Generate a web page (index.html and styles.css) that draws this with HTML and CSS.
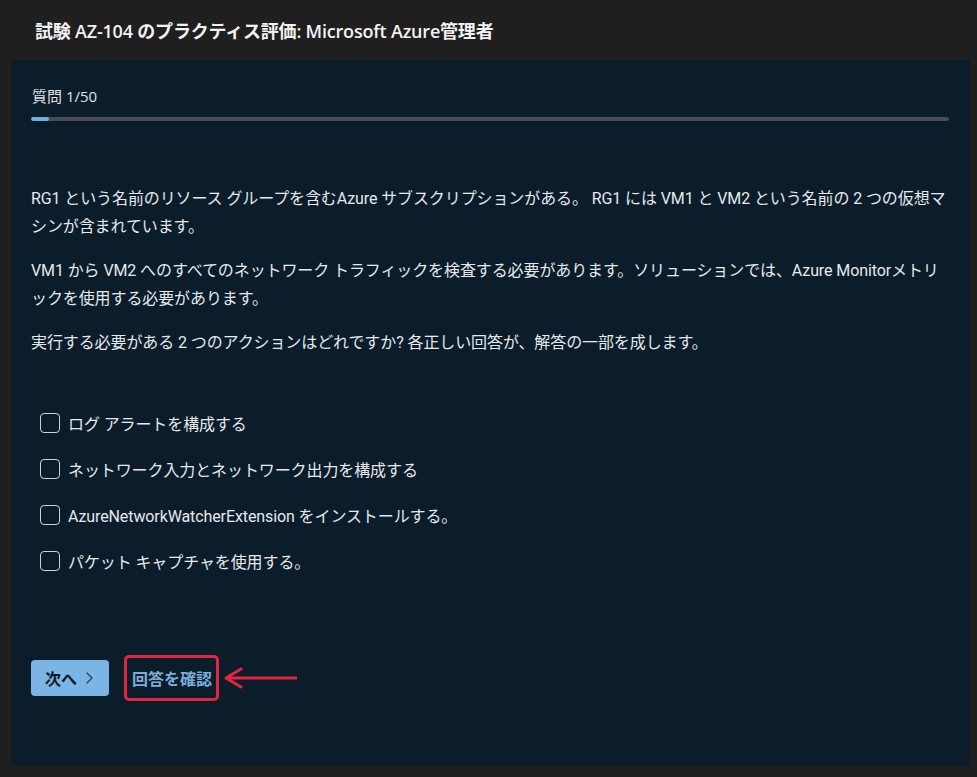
FILE: index.html
```html
<!DOCTYPE html>
<html lang="ja">
<head>
<meta charset="utf-8">
<title>試験 AZ-104 のプラクティス評価</title>
<link rel="stylesheet" href="styles.css">
</head>
<body>
<header class="top">
  <h1 class="title">試験 AZ-104 のプラクティス評価: Microsoft Azure管理者</h1>
</header>
<main class="panel">
  <div class="counter">質問 1/50</div>
  <div class="track"><div class="fill" style="width:2%"></div></div>

  <div class="question">
    <p>RG1 という名前のリソース グループを含むAzure サブスクリプションがある。 RG1 には VM1 と VM2 という名前の 2 つの仮想マシンが含まれています。</p>
    <p>VM1 から VM2 へのすべてのネットワーク トラフィックを検査する必要があります。ソリューションでは、Azure Monitorメトリックを使用する必要があります。</p>
    <p>実行する必要がある 2 つのアクションはどれですか? 各正しい回答が、解答の一部を成します。</p>
  </div>

  <ul class="options">
    <li class="option"><span class="box"></span><span>ログ アラートを構成する</span></li>
    <li class="option"><span class="box"></span><span>ネットワーク入力とネットワーク出力を構成する</span></li>
    <li class="option"><span class="box"></span><span>AzureNetworkWatcherExtension をインストールする。</span></li>
    <li class="option"><span class="box"></span><span>パケット キャプチャを使用する。</span></li>
  </ul>

  <div class="actions">
    <button class="next"><span>次へ</span>
      <svg class="chev" width="7" height="12" viewBox="0 0 7 12" aria-hidden="true"><path d="M1 1 L6 6 L1 11" fill="none" stroke="#2a3e4e" stroke-width="1.2" stroke-linecap="round" stroke-linejoin="round"/></svg>
    </button>
    <span class="highlight"><a class="check" href="#">回答を確認</a></span>
    <svg class="arrow" width="74" height="22" viewBox="0 0 74 22" aria-hidden="true">
      <path d="M73 11 H3 M18 2 L3 11 L18 20" fill="none" stroke="#e3263f" stroke-width="3" stroke-linecap="round" stroke-linejoin="round"/>
    </svg>
  </div>
</main>
</body>
</html>
```

FILE: styles.css
```css
* { box-sizing: border-box; }

html, body {
  margin: 0;
  padding: 0;
  background: #1f1f1f;
}

body {
  font-family: "Open Sans", "Noto Sans CJK JP", sans-serif;
  color: #e6e8ea;
  width: 977px;
  height: 777px;
  overflow: hidden;
}

.top {
  height: 60px;
  display: flex;
  align-items: center;
  padding-left: 35px;
}

.title {
  margin: 0;
  font-size: 18px;
  font-weight: 600;
  color: #f2f2f2;
  letter-spacing: -0.2px;
}

.panel {
  margin: 0 7px 11px 11px;
  height: 706px;
  background: #0b1d2b;
  padding: 26px 21px 0 20px;
}

.counter {
  font-size: 15px;
  line-height: 20px;
  color: #e0e2e4;
  padding-left: 1px;
}

.track {
  margin-top: 11px;
  height: 4px;
  background: #474d52;
  border-radius: 2px;
  overflow: hidden;
}

.fill {
  height: 100%;
  background: #74ade0;
  border-radius: 2px;
}

.question {
  margin-top: 64px;
  font-family: Roboto, "Noto Sans CJK JP", sans-serif;
  font-size: 16px;
  line-height: 28px;
  letter-spacing: -0.1px;
}

.question p {
  margin: 0 0 16px 0;
}

.question p:last-child { margin-bottom: 0; }

.options {
  list-style: none;
  margin: 43px 0 0 0;
  padding: 0 0 0 9px;
  font-family: Roboto, "Noto Sans CJK JP", sans-serif;
  letter-spacing: -0.1px;
}

.option {
  display: flex;
  align-items: center;
  gap: 8px;
  height: 46px;
  font-size: 16px;
}

.box {
  width: 20px;
  height: 20px;
  border: 1.5px solid #cfd3d6;
  border-radius: 4px;
  flex: none;
}

.actions {
  margin-top: 71px;
  display: flex;
  align-items: center;
}

.next {
  height: 36px;
  border: none;
  border-radius: 4px;
  background: #7ab5e6;
  color: #0c1a26;
  font-family: inherit;
  font-size: 16px;
  font-weight: 700;
  padding: 0 16px 0 14px;
  display: flex;
  align-items: center;
  gap: 9px;
}

.chev { display: block; }

.highlight {
  margin-left: 15px;
  border: 3px solid #e3263f;
  border-radius: 5px;
  padding: 0 4px 0 5px;
  height: 46px;
  display: flex;
  align-items: center;
}

.check {
  color: #7aaed9;
  font-size: 16px;
  font-weight: 700;
  text-decoration: none;
}

.arrow {
  margin-left: 4px;
  display: block;
}
```
